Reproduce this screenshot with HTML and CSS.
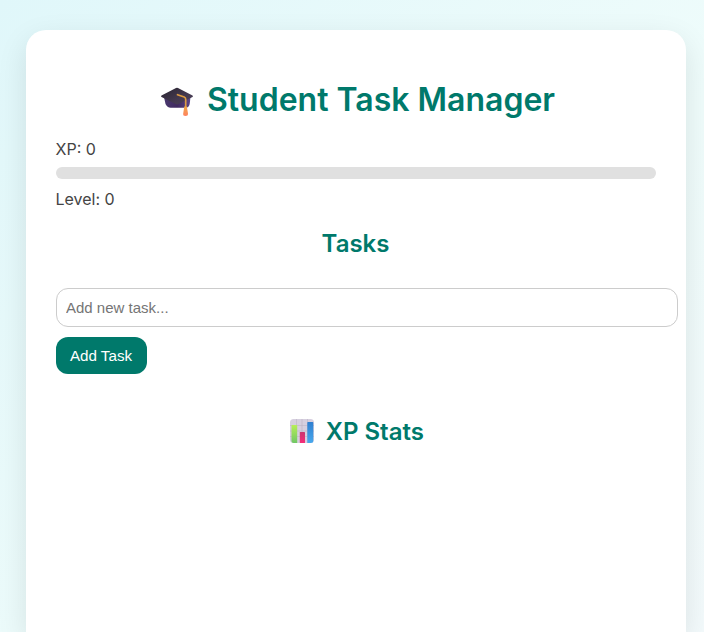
FILE: index.html
```html
<!DOCTYPE html>
<html lang="en">
<head>
<meta charset="utf-8">
<title>Student Task Manager</title>
<link rel="stylesheet" href="styles.css">
</head>
<body>
<main class="container">
  <h1 class="title">
    <svg class="cap" viewBox="0 0 34 32" aria-hidden="true">
      <defs>
        <linearGradient id="board" x1="0" y1="0" x2="1" y2="1"><stop offset="0" stop-color="#29242f"/><stop offset=".6" stop-color="#43384f"/><stop offset="1" stop-color="#4c4158"/></linearGradient>
        <linearGradient id="base" x1="0" x2="1"><stop offset="0" stop-color="#49386e"/><stop offset=".5" stop-color="#40295f"/><stop offset="1" stop-color="#5c4689"/></linearGradient>
        <linearGradient id="tassel" x1="0" y1="0" x2="0" y2="1"><stop offset="0" stop-color="#f0a848"/><stop offset="1" stop-color="#ff8260"/></linearGradient>
      </defs>
      <path d="M4 11h26.500l-.8 7q-.7 3.700-4 3.700h-15q-3.500 0-5.200-3.700z" fill="url(#base)"/>
      <path d="M16 2q1-.5 2 0l14.500 7.500q1 .7 0 1.400l-14.500 7.300q-1 .5-2 0L1.500 11q-1-.7 0-1.400z" fill="url(#board)"/>
      <path d="M17.500 8.700l6.700 2.300q1.500.6 1.500 2.300v9" fill="none" stroke="#dc9b42" stroke-width="1.700" stroke-linecap="round"/>
      <path d="M24.300 20.500h2.500l1.200 7q.2 2.500-2.500 2.500t-2.300-2.500z" fill="url(#tassel)"/>
    </svg>
    <span>Student Task Manager</span>
  </h1>
  <div class="stat">XP: 0</div>
  <div class="bar"></div>
  <div class="stat">Level: 0</div>
  <h2 class="heading">Tasks</h2>
  <input class="field" type="text" placeholder="Add new task...">
  <button class="add">Add Task</button>
  <h2 class="heading stats">
    <svg class="chart" viewBox="0 0 26 26" aria-hidden="true">
      <defs>
        <linearGradient id="green" x1="0" y1="0" x2="0" y2="1"><stop offset="0" stop-color="#b7ee57"/><stop offset="1" stop-color="#70c765"/></linearGradient>
        <linearGradient id="pink" x1="0" y1="0" x2="0" y2="1"><stop offset="0" stop-color="#c9366f"/><stop offset="1" stop-color="#f52d78"/></linearGradient>
        <linearGradient id="blue" x1="0" y1="0" x2="0" y2="1"><stop offset="0" stop-color="#2f7fd0"/><stop offset="1" stop-color="#48a8ed"/></linearGradient>
      </defs>
      <rect x="1" y="1" width="24" height="24" rx="3.500" fill="#d6cfdf"/>
      <path d="M1 7.500h24M1 13h24M1 18.500h24M7.500 1v24M13 1v24M18.500 1v24" stroke="#bdb3c5" stroke-width=".6"/>
      <path d="M2.500 7.700q0-.7.700-.7h4.300q.7 0 .7.700V25H4.500Q2.500 25 2.500 23z" fill="url(#green)"/>
      <rect x="10.800" y="14" width="5.200" height="11" rx=".6" fill="url(#pink)"/>
      <path d="M18.300 4.700q0-.7.700-.7h4.600q.7 0 .7.700v17.800q0 2.500-2.500 2.500h-3.500z" fill="url(#blue)"/>
    </svg>
    <span>XP Stats</span>
  </h2>
</main>
</body>
</html>
```

FILE: styles.css
```css
html {
  height: 100%;
}
body {
  margin: 0;
  padding: 30px 0 0 25.5px;
  height: 100vh;
  overflow: hidden;
  box-sizing: border-box;
  background: linear-gradient(135deg, #e0f7fa, #effcfb 50%, #f5f9fc) 0 0 / 100% 900px no-repeat;
  font-family: Inter, sans-serif;
  color: #444;
}
.container {
  width: 660px;
  height: calc(100vh - 30px);
  box-sizing: border-box;
  padding: 46px 30px 30px;
  background: #fff;
  border-radius: 20px 20px 0 0;
  box-shadow: 0 10px 30px rgba(0, 0, 0, .1);
}
.title,
.heading {
  display: flex;
  align-items: center;
  justify-content: center;
  margin: 0;
  color: #00796b;
  font-weight: 600;
}
.title {
  height: 48px;
  padding-left: 4px;
  font-size: 32px;
  gap: 13px;
}
.title span {
  margin-top: -2px;
}
.cap {
  width: 34px;
  height: 32px;
  margin-top: 4px;
}
.stat {
  height: 20px;
  margin-top: 15px;
  font-size: 16px;
  line-height: 20px;
}
.bar {
  height: 12px;
  margin: 8px 0 -5px;
  border-radius: 6px;
  background: #e0e0e0;
}
.heading {
  height: 30px;
  margin-top: 19px;
  font-size: 24px;
}
.field {
  display: block;
  box-sizing: border-box;
  width: 622px;
  height: 39px;
  margin-top: 30px;
  padding: 0 9.5px;
  border: 1px solid #ccc;
  border-radius: 12px;
  font: 15px "Liberation Sans", sans-serif;
}
.add {
  display: block;
  width: 91px;
  height: 37px;
  margin-top: 10px;
  padding: 0;
  border: 0;
  border-radius: 12px;
  background: #00796b;
  color: #fff;
  font: 15.2px "Liberation Sans", sans-serif;
}
.stats {
  margin-top: 42px;
  padding-left: 2px;
  gap: 10.5px;
}
.chart {
  width: 26px;
  height: 26px;
}
```
